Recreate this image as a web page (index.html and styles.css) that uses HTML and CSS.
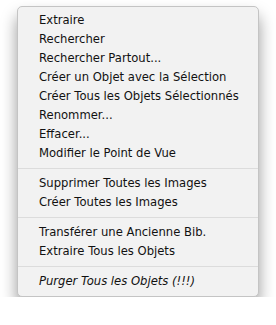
FILE: index.html
```html
<!DOCTYPE html>
<html>
<head>
<meta charset="utf-8">
<link rel="stylesheet" href="styles.css">
</head>
<body>
<div class="menu">
  <div class="item">Extraire</div>
  <div class="item">Rechercher</div>
  <div class="item">Rechercher Partout...</div>
  <div class="item">Créer un Objet avec la Sélection</div>
  <div class="item">Créer Tous les Objets Sélectionnés</div>
  <div class="item">Renommer...</div>
  <div class="item">Effacer...</div>
  <div class="item">Modifier le Point de Vue</div>
  <div class="sep"></div>
  <div class="item">Supprimer Toutes les Images</div>
  <div class="item">Créer Toutes les Images</div>
  <div class="sep"></div>
  <div class="item">Transférer une Ancienne Bib.</div>
  <div class="item">Extraire Tous les Objets</div>
  <div class="sep"></div>
  <div class="item italic">Purger Tous les Objets (!!!)</div>
</div>
</body>
</html>
```
FILE: styles.css
```css
html, body {
  margin: 0;
  padding: 0;
  background: #ffffff;
}
body {
  padding: 6px 0 0 17px;
}
.menu {
  width: 240px;
  box-sizing: content-box;
  background: #f2f2f2;
  border: 1px solid #c4c4c4;
  border-radius: 5px;
  padding: 4px 0 5px 0;
  box-shadow: 0 10px 16px rgba(0, 0, 0, 0.4);
  font-family: "DejaVu Sans", sans-serif;
  font-size: 11.6px;
  color: #111;
}
.item {
  height: 19px;
  line-height: 19px;
  padding-left: 21px;
  white-space: nowrap;
}
.italic {
  font-style: italic;
}
.sep {
  height: 1px;
  background: #dcdcdc;
  margin: 5px 0;
}
```
